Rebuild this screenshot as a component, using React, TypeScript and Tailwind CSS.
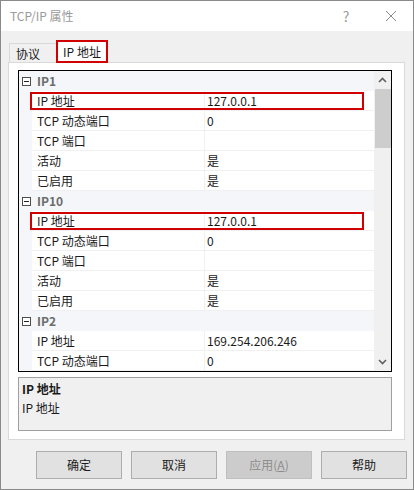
import React from "react";

type Row =
  | { kind: "cat"; name: string }
  | { kind: "prop"; name: string; value: string; boxed?: boolean };

const rows: Row[] = [
  { kind: "cat", name: "IP1" },
  { kind: "prop", name: "IP 地址", value: "127.0.0.1", boxed: true },
  { kind: "prop", name: "TCP 动态端口", value: "0" },
  { kind: "prop", name: "TCP 端口", value: "" },
  { kind: "prop", name: "活动", value: "是" },
  { kind: "prop", name: "已启用", value: "是" },
  { kind: "cat", name: "IP10" },
  { kind: "prop", name: "IP 地址", value: "127.0.0.1", boxed: true },
  { kind: "prop", name: "TCP 动态端口", value: "0" },
  { kind: "prop", name: "TCP 端口", value: "" },
  { kind: "prop", name: "活动", value: "是" },
  { kind: "prop", name: "已启用", value: "是" },
  { kind: "cat", name: "IP2" },
  { kind: "prop", name: "IP 地址", value: "169.254.206.246" },
  { kind: "prop", name: "TCP 动态端口", value: "0" },
];

function Collapse() {
  return (
    <svg width="9" height="9" viewBox="0 0 9 9" className="block">
      <rect x="0.5" y="0.5" width="8" height="8" fill="white" stroke="#4d4d4d" />
      <line x1="2" y1="4.5" x2="7" y2="4.5" stroke="#222" />
    </svg>
  );
}

function GridRow({ row }: { row: Row }) {
  if (row.kind === "cat") {
    return (
      <div className="flex h-[20px] shrink-0 items-center bg-[#f4f6f9]">
        <div className="w-[13px] pl-[3px] flex items-center">
          <Collapse />
        </div>
        <div className="pl-[5px] font-bold text-[#6d6d6d] leading-none">{row.name}</div>
      </div>
    );
  }
  return (
    <div className="relative flex h-[20px] shrink-0">
      <div className="w-[13px] bg-[#f4f6f9]" />
      <div className="flex w-[172px] items-center border-b border-[#f0f0f0] pl-[5px] leading-none text-[#1a1a1a]">
        {row.name}
      </div>
      <div className="flex flex-1 items-center border-b border-l border-[#f0f0f0] pl-[2px] leading-none text-[#1a1a1a]">
        {row.value}
      </div>
      {row.boxed && (
        <div className="absolute left-[11px] top-[1px] h-[18px] w-[334px] border-2 border-[#d00000]" />
      )}
    </div>
  );
}

function Chevron({ up }: { up?: boolean }) {
  return (
    <svg width="9" height="6" viewBox="0 0 9 6" className="block">
      <polyline
        points={up ? "1,5 4.5,1.5 8,5" : "1,1 4.5,4.5 8,1"}
        fill="none"
        stroke="#606060"
        strokeWidth="1.6"
      />
    </svg>
  );
}

function Button({ children, disabled }: { children: React.ReactNode; disabled?: boolean }) {
  return (
    <div
      className={
        disabled
          ? "flex h-[28px] w-[86px] items-center justify-center border border-[#bfbfbf] bg-[#cccccc] text-[#8d8d8d]"
          : "flex h-[28px] w-[86px] items-center justify-center border border-[#adadad] bg-[#e1e1e1] text-[#1a1a1a]"
      }
    >
      {children}
    </div>
  );
}

export default function App() {
  return (
    <div className="flex h-[490px] w-[414px] flex-col overflow-hidden border border-[#8a8a8a] bg-[#f0f0f0] font-['Noto_Sans_CJK_SC','Microsoft_YaHei',sans-serif] text-[12px]">
      {/* title bar */}
      <div className="flex h-[30px] shrink-0 items-center bg-white">
        <span className="ml-[9px] text-[12px] text-[#9a9a9a]">TCP/IP 属性</span>
        <div className="flex-1" />
        <div className="flex w-[46px] items-center justify-center text-[14px] text-[#9a9a9a]">?</div>
        <div className="flex w-[44px] items-center justify-center">
          <svg width="12" height="12" viewBox="0 0 12 12">
            <line x1="1" y1="1" x2="11" y2="11" stroke="#8a8a8a" strokeWidth="1" />
            <line x1="11" y1="1" x2="1" y2="11" stroke="#8a8a8a" strokeWidth="1" />
          </svg>
        </div>
      </div>

      {/* tabs */}
      <div className="ml-[8px] mt-[9px] flex h-[23px] shrink-0 items-end">
        <div className="flex h-[20px] w-[48px] items-center border-l border-r border-t border-[#d9d9d9] bg-[#f0f0f0] pl-[6px] text-[#1a1a1a]">
          协议
        </div>
        <div className="relative z-10 -ml-[1px] flex h-[23px] w-[52px] items-center justify-center bg-white text-[#1a1a1a]">
          IP 地址
          <div className="absolute inset-0 border-2 border-[#d00000]" />
        </div>
      </div>

      {/* tab panel */}
      <div className="-mt-[1px] ml-[7px] flex h-[378px] w-[397px] shrink-0 flex-col border border-[#d9d9d9] bg-white pl-[9px] pt-[7px]">
        <div className="flex h-[302px] w-[374px] border border-black bg-white">
          <div className="flex flex-1 flex-col overflow-hidden">
            {rows.map((r, i) => (
              <GridRow key={i} row={r} />
            ))}
          </div>
          <div className="flex w-[17px] flex-col bg-[#f0f0f0]">
            <div className="flex h-[18px] items-center justify-center">
              <Chevron up />
            </div>
            <div className="ml-[1px] h-[59px] bg-[#cdcdcd]" />
            <div className="flex-1" />
            <div className="flex h-[18px] items-center justify-center">
              <Chevron />
            </div>
          </div>
        </div>
        <div className="mt-[5px] flex h-[54px] w-[374px] flex-col border border-[#a0a0a0] bg-[#f0f0f0] pl-[3px] pt-[2px] text-[#1a1a1a]">
          <div className="flex h-[18px] items-center font-bold">IP 地址</div>
          <div className="flex h-[20px] items-center">IP 地址</div>
        </div>
      </div>

      {/* buttons */}
      <div className="ml-[35px] mt-[11px] flex gap-[9px]">
        <Button>确定</Button>
        <Button>取消</Button>
        <Button disabled>
          <span>
            应用(<span className="underline">A</span>)
          </span>
        </Button>
        <Button>帮助</Button>
      </div>
    </div>
  );
}
